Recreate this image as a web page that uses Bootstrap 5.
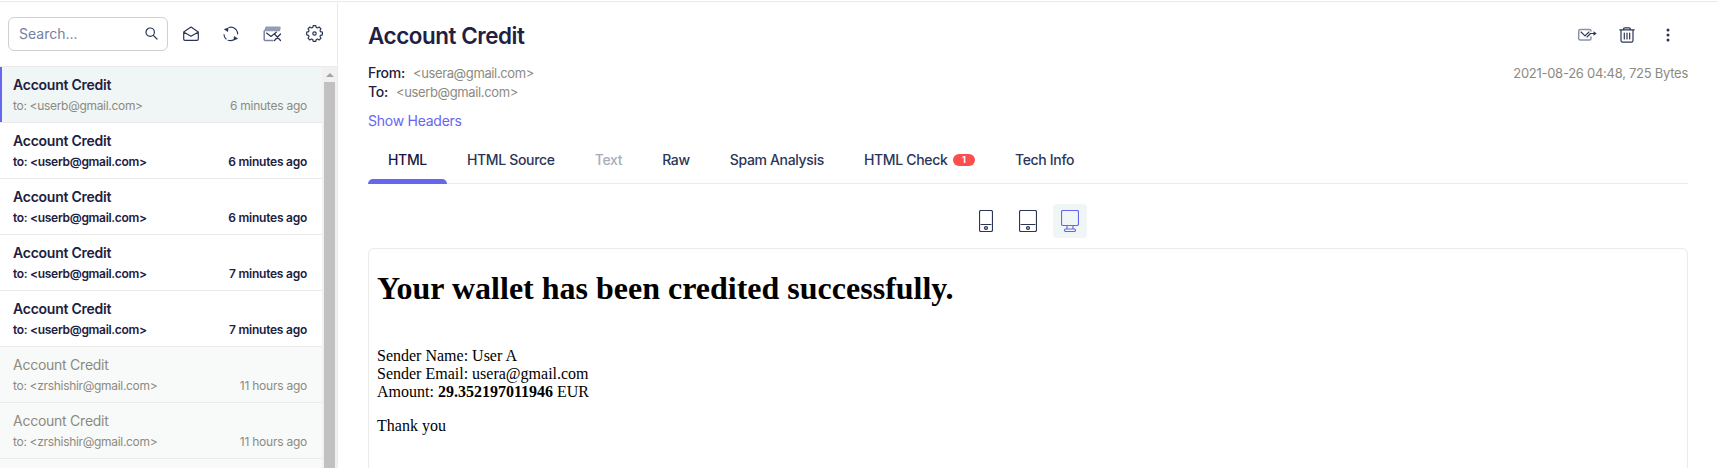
<!DOCTYPE html>
<html lang="en">
<head>
<meta charset="utf-8">
<meta name="viewport" content="width=device-width, initial-scale=1">
<title>Account Credit</title>
<link rel="stylesheet" href="https://cdn.jsdelivr.net/npm/bootstrap@5.3.0/dist/css/bootstrap.min.css">
<style>
  :root { --ink: #212040; --navy: #2b3558; --line: #ebebeb; --muted-mail: #8c8a80; --accent: #6666f0; }
  body { font-family: Inter, sans-serif; font-size: 14px; line-height: 20px; letter-spacing: -.25px; color: var(--ink); background: #fff; }
  svg { display: block; flex: none; fill: none; stroke: var(--navy); stroke-width: 1.2; stroke-linecap: round; stroke-linejoin: round; }
  .app { height: 468px; padding-top: 2px; background: linear-gradient(var(--line), var(--line)) 0 1px / 100% 1px no-repeat; }
  .mail-side { width: 338px; border-right: 1px solid var(--line); }
  .mail-tools { height: 65px; padding: 0 14px 1px 8px; border-bottom: 1px solid var(--line); }
  .search-box { width: 160px; height: 34px; border: 1px solid #cfcfd6; border-radius: 6px; padding: 0 9px 0 10px; margin-right: 15px; }
  .search-box input { font-size: 14px; line-height: 20px; color: var(--navy); outline: 0; min-width: 0; }
  .search-box input::placeholder { color: #76809f; opacity: 1; letter-spacing: 0; }
  .tool-icons { flex: 1; }
  .mail-list { width: 322px; }
  .mail-row { height: 56px; flex: none; padding: 8px 15px 0 13px; border-bottom: 1px solid var(--line); font-weight: 600; font-size: 12px; line-height: 18px; }
  .mail-row .subject { font-size: 14px; line-height: 20px; }
  .mail-row .meta { margin-top: 2px; letter-spacing: -.31px; }
  .mail-row .meta span + span { letter-spacing: -.24px; }
  .mail-row.seen { background: #f8faf9; color: var(--muted-mail); font-weight: 400; }
  .mail-row.current { background: #f0f6f6; box-shadow: inset 2px 0 var(--accent); }
  .mail-row.current .meta { color: var(--muted-mail); font-weight: 400; }
  .scroll-track { width: 15px; background: #f1f1f1; }
  .scroll-arrow { height: 15px; }
  .scroll-arrow::after { content: ""; border: 4px solid transparent; border-top: 0; border-bottom-color: #a3a3a3; }
  .scroll-thumb { margin: 0 2px; background: #c1c1c1; }
  .mail-main { padding: 0 30px; }
  .mail-title { font-size: 22.4px; line-height: 32px; font-weight: 600; letter-spacing: -.43px; }
  .addr { font-size: 13px; line-height: 16px; letter-spacing: -.37px; color: var(--muted-mail); margin-left: 4.5px; }
  .people { line-height: 19px; font-weight: 500; }
  .people .addr { font-weight: 400; }
  .people > .addr { line-height: 20px; letter-spacing: -.27px; }
  .headers-link { color: var(--accent); }
  .mail-tabs { border-bottom: 1px solid var(--line); height: 45px; }
  .mail-tabs .nav-link { padding: 11px 20px 0; height: 45px; line-height: 20px; color: var(--navy); font-weight: 500; letter-spacing: -.33px; }
  .mail-tabs .nav-link.active { color: #191741; position: relative; }
  .mail-tabs .nav-link.active::after { content: ""; position: absolute; left: 0; right: 0; bottom: 0; height: 5px; border-radius: 5px 5px 0 0; background: var(--accent); }
  .mail-tabs .nav-link.disabled { color: #a9adb9; }
  .count-pill { width: 22px; height: 12px; border-radius: 6px; background: #fb4e4e; color: #fff; font-size: 9px; line-height: 12px; font-weight: 700; margin: 4px 0 0 5.5px; letter-spacing: 0; }
  .device { width: 34px; height: 34px; border-radius: 4px; border: 0; padding: 0; background: none; }
  .device.on { background: #f0f6f6; }
  .device.on svg { stroke: var(--accent); }
  .preview { border: 1px solid var(--line); border-bottom: 0; border-radius: 6px 6px 0 0; padding: 21px 8px 0; font: 16px/18px "Liberation Serif", serif; letter-spacing: 0; color: #000; }
  .preview h1 { font-size: 32px; line-height: 37px; font-weight: 700; }
</style>
</head>
<body>
<div class="app d-flex overflow-hidden">
  <aside class="mail-side d-flex flex-column flex-shrink-0 overflow-hidden">
    <div class="mail-tools d-flex align-items-center flex-shrink-0">
      <label class="search-box d-flex align-items-center flex-shrink-0">
        <input class="border-0 p-0 flex-fill bg-transparent" type="text" placeholder="Search...">
        <svg width="13" height="13" viewBox="0 0 13 13"><circle cx="5.2" cy="5.2" r="4.200"/><path d="M8.300 8.300l3.700 3.700"/></svg>
      </label>
      <div class="tool-icons d-flex align-items-center justify-content-between">
      <svg width="16" height="16" viewBox="0 0 16 16"><path d="M.700 6 8 1l7.300 5v7q0 1.300-1.300 1.300H2Q.700 14.300.700 13zM1 6.300 8 10.300l7-4"/></svg>
      <svg width="16" height="16" viewBox="0 0 16 16"><path d="M1 8.500Q1 11 3 13M6 1.500Q10 .300 13 3.500 14.600 5.500 14.700 8M5 14.300q3 .900 6-.5" stroke-width="1.100"/><path d="M.800 3.300 5.500 1.500 5 6zM15.200 12.700l-4.700 1.800.5-4.500z" fill="#2b3558" stroke="none"/></svg>
      <svg width="19" height="16" viewBox="0 0 19 16"><path d="M3.200.500h13.300q1.400 0 1.200 1.300L17 5.200H1L2.300 1.300q.2-.8.900-.8z" fill="#959db1" stroke="none"/><path d="M1.200 5v8.500q0 1 1 1H10" stroke="#7b849e" stroke-width="1.500"/><path d="M3.500 7l4.500 3.500L13.500 6" stroke-width="1.100"/><path d="M11.500 8l6 6.500M17.500 8l-6 6.500"/></svg>
      <svg width="17" height="17" viewBox="0 0 17 17"><path d="M7.200 1h2.600l.5 1.900 1.200.5 1.700-1 1.800 1.800-1 1.700.5 1.200 1.900.5v2.600l-1.900.5-.5 1.200 1 1.700-1.800 1.800-1.700-1-1.200.5-.5 1.900H7.200l-.5-1.900-1.200-.5-1.700 1L2 13.600l1-1.700-.5-1.200L.7 10.200V7.600l1.800-.5.5-1.200-1-1.700 1.800-1.800 1.700 1 1.200-.5z" transform="translate(0 -.4)"/><circle cx="8.500" cy="8.500" r="1.700"/></svg>
      </div>
    </div>
    <div class="d-flex flex-fill overflow-hidden">
      <div class="mail-list d-flex flex-column overflow-hidden">
        <div class="mail-row current"><div class="subject">Account Credit</div><div class="meta d-flex justify-content-between"><span>to: &lt;userb@gmail.com&gt;</span><span>6 minutes ago</span></div></div>
        <div class="mail-row"><div class="subject">Account Credit</div><div class="meta d-flex justify-content-between"><span>to: &lt;userb@gmail.com&gt;</span><span>6 minutes ago</span></div></div>
        <div class="mail-row"><div class="subject">Account Credit</div><div class="meta d-flex justify-content-between"><span>to: &lt;userb@gmail.com&gt;</span><span>6 minutes ago</span></div></div>
        <div class="mail-row"><div class="subject">Account Credit</div><div class="meta d-flex justify-content-between"><span>to: &lt;userb@gmail.com&gt;</span><span>7 minutes ago</span></div></div>
        <div class="mail-row"><div class="subject">Account Credit</div><div class="meta d-flex justify-content-between"><span>to: &lt;userb@gmail.com&gt;</span><span>7 minutes ago</span></div></div>
        <div class="mail-row seen"><div class="subject">Account Credit</div><div class="meta d-flex justify-content-between"><span>to: &lt;zrshishir@gmail.com&gt;</span><span>11 hours ago</span></div></div>
        <div class="mail-row seen"><div class="subject">Account Credit</div><div class="meta d-flex justify-content-between"><span>to: &lt;zrshishir@gmail.com&gt;</span><span>11 hours ago</span></div></div>
        <div class="mail-row seen"></div>
      </div>
      <div class="scroll-track d-flex flex-column">
        <div class="scroll-arrow d-flex align-items-center justify-content-center"></div>
        <div class="scroll-thumb flex-fill"></div>
      </div>
    </div>
  </aside>

  <main class="mail-main flex-fill d-flex flex-column">
    <div class="d-flex justify-content-between align-items-center" style="padding-top:18px">
      <h1 class="mail-title mb-0">Account Credit</h1>
      <div class="d-flex align-items-center" style="padding-right:18px;gap:22px;margin-bottom:2px">
        <svg width="20" height="16" viewBox="0 0 20 16"><path d="M14 4Q14 2.500 12.500 2.500h-9Q1.700 2.500 1.700 4v7.500Q1.700 13 3.500 13h9q1.500 0 1.500-1.500V10" stroke="#8a93aa" stroke-width="1.500"/><path d="M4 5 8 8.800 12 5M10 10 13.500 6.500h4" stroke-width="1.100"/><path d="M16.500 4.300 19.700 6.500l-3.200 2.200z" fill="#2b3558" stroke="none"/></svg>
        <svg width="16" height="16" viewBox="0 0 16 16"><path d="M.800 2.800h14.400M4.500 2.500q0-1.700 1.500-1.700h4q1.500 0 1.500 1.700M2 3v10.500q0 1.700 1.700 1.700h8.600q1.700 0 1.700-1.700V3M5.300 6v6M8 6v6M10.700 6v6"/></svg>
        <svg width="4" height="14" viewBox="0 0 4 14" style="margin-left:9px"><g fill="#2b3558" stroke="none"><circle cx="2" cy="2" r="1.500"/><circle cx="2" cy="7" r="1.500"/><circle cx="2" cy="12" r="1.500"/></g></svg>
      </div>
    </div>
    <div class="people d-flex justify-content-between" style="margin-top:11px">
      <div>
        <div>From: <span class="addr">&lt;usera@gmail.com&gt;</span></div>
        <div>To: <span class="addr">&lt;userb@gmail.com&gt;</span></div>
      </div>
      <span class="addr">2021-08-26 04:48, 725 Bytes</span>
    </div>
    <div style="margin-top:10px"><a class="headers-link text-decoration-none" href="#">Show Headers</a></div>
    <nav class="mail-tabs nav flex-nowrap" style="margin-top:8px">
      <a class="nav-link active" href="#">HTML</a>
      <a class="nav-link" href="#">HTML Source</a>
      <a class="nav-link disabled">Text</a>
      <a class="nav-link" href="#">Raw</a>
      <a class="nav-link" href="#">Spam Analysis</a>
      <a class="nav-link d-flex align-items-start" href="#">HTML Check<span class="count-pill text-center">1</span></a>
      <a class="nav-link" href="#">Tech Info</a>
    </nav>
    <div class="d-flex justify-content-center gap-2" style="padding:20px 0 10px">
      <button class="device d-flex align-items-center justify-content-center" aria-label="Phone"><svg width="14" height="22" viewBox="0 0 14 22"><rect x=".5" y=".5" width="13" height="21" rx="1.500"/><path d="M2 14.500h10"/><circle cx="7" cy="18" r="1.500" fill="#b0b6c5"/></svg></button>
      <button class="device d-flex align-items-center justify-content-center" aria-label="Tablet"><svg width="18" height="22" viewBox="0 0 18 22"><rect x=".5" y=".5" width="17" height="21" rx="1.500"/><path d="M2 14.500h14"/><circle cx="9" cy="18" r="1.500" fill="#b0b6c5"/></svg></button>
      <button class="device on d-flex align-items-center justify-content-center" aria-label="Desktop"><svg width="18" height="22" viewBox="0 0 18 22"><rect x=".5" y=".5" width="17" height="15" rx="1.500"/><path d="M6 16v2.500M12 16v2.500"/><rect x="3.500" y="19" width="11" height="2.500" rx="1.200"/></svg></button>
    </div>
    <section class="preview flex-fill">
      <h1 class="m-0">Your wallet has been credited successfully.</h1>
      <div style="margin-top:40px">Sender Name: User A<br>Sender Email: usera@gmail.com<br>Amount: <b>29.352197011946</b> EUR</div>
      <p class="mt-3 mb-0">Thank you</p>
    </section>
  </main>
</div>
<script src="https://cdn.jsdelivr.net/npm/bootstrap@5.3.0/dist/js/bootstrap.bundle.min.js"></script>
</body>
</html>
